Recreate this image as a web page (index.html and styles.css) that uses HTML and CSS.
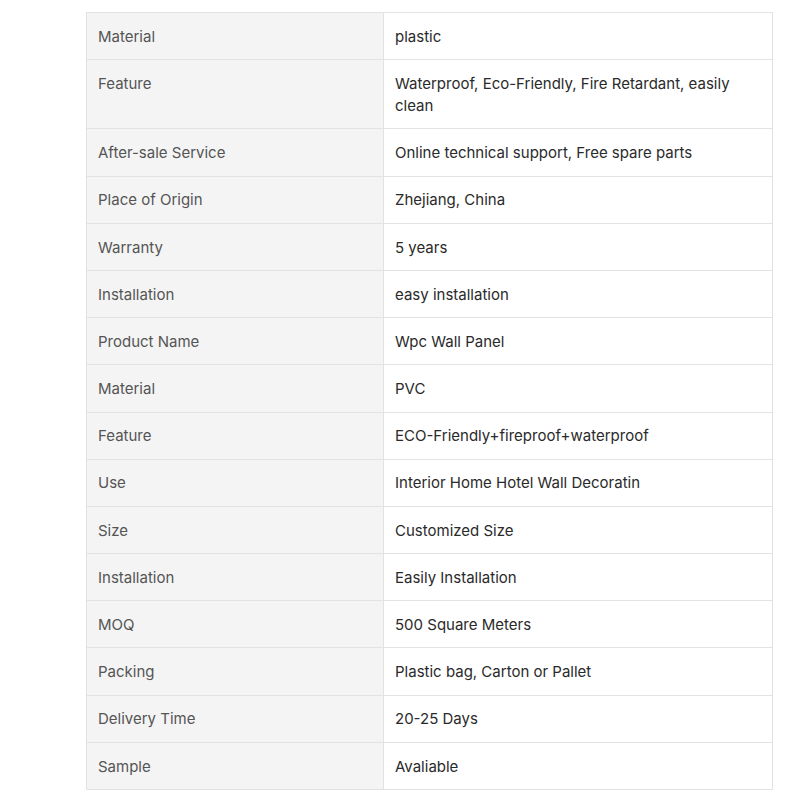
FILE: index.html
```html
<!DOCTYPE html>
<html>
<head>
<meta charset="utf-8">
<link rel="stylesheet" href="styles.css">
</head>
<body>
<div class="wrap">
<table class="spec">
<tbody>
<tr><td class="k">Material</td><td class="v">plastic</td></tr>
<tr><td class="k">Feature</td><td class="v">Waterproof, Eco-Friendly, Fire Retardant, easily clean</td></tr>
<tr><td class="k">After-sale Service</td><td class="v">Online technical support, Free spare parts</td></tr>
<tr><td class="k">Place of Origin</td><td class="v">Zhejiang, China</td></tr>
<tr><td class="k">Warranty</td><td class="v">5 years</td></tr>
<tr><td class="k">Installation</td><td class="v">easy installation</td></tr>
<tr><td class="k">Product Name</td><td class="v">Wpc Wall Panel</td></tr>
<tr><td class="k">Material</td><td class="v">PVC</td></tr>
<tr><td class="k">Feature</td><td class="v">ECO-Friendly+fireproof+waterproof</td></tr>
<tr><td class="k">Use</td><td class="v">Interior Home Hotel Wall Decoratin</td></tr>
<tr><td class="k">Size</td><td class="v">Customized Size</td></tr>
<tr><td class="k">Installation</td><td class="v">Easily Installation</td></tr>
<tr><td class="k">MOQ</td><td class="v">500 Square Meters</td></tr>
<tr><td class="k">Packing</td><td class="v">Plastic bag, Carton or Pallet</td></tr>
<tr><td class="k">Delivery Time</td><td class="v">20-25 Days</td></tr>
<tr><td class="k">Sample</td><td class="v">Avaliable</td></tr>
</tbody>
</table>
</div>
</body>
</html>
```
FILE: styles.css
```css
html, body {
  margin: 0;
  padding: 0;
  background: #fff;
}
.wrap {
  padding: 12px 27px 0 86px;
}
.spec {
  width: 100%;
  border-collapse: collapse;
  font-family: Inter, "Noto Sans", sans-serif;
  font-size: 15px;
  line-height: 22px;
}
.spec td {
  border: 1px solid #e2e2e2;
  padding: 12.8px 11px 11.4px;
  vertical-align: top;
  text-align: left;
}
.spec .k {
  width: 274px;
  background: #f4f4f4;
  color: #555;
}
.spec .v {
  background: #fff;
  color: #2a2a2a;
}
```
